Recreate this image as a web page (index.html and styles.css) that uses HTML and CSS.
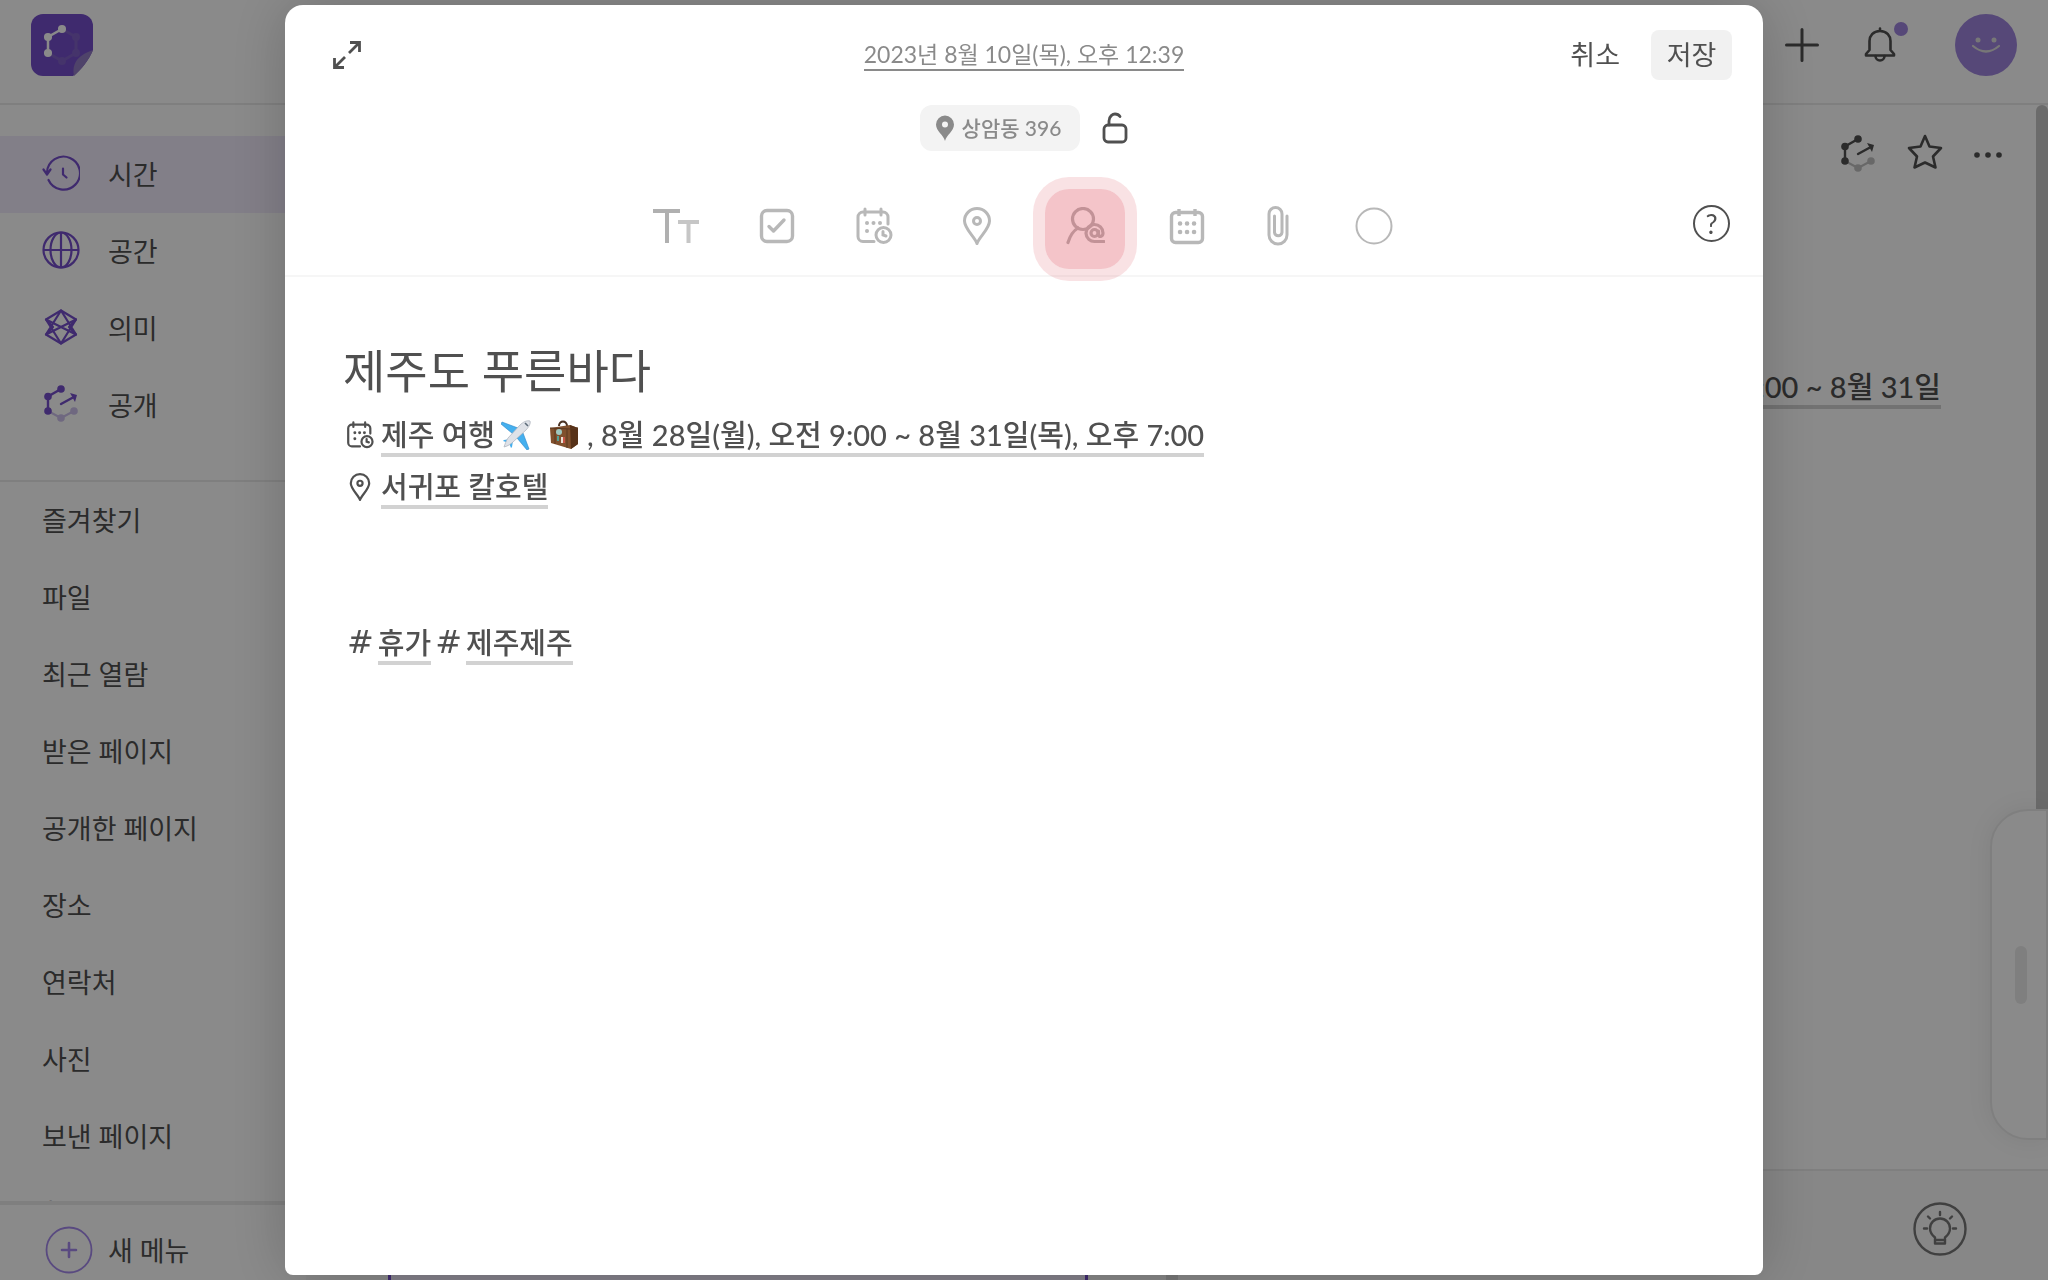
FILE: index.html
```
<!DOCTYPE html>
<html lang="ko">
<head>
    <meta charset="UTF-8">
    <meta name="viewport" content="width=device-width, initial-scale=1.0">
    <title>제주도 푸른바다</title>
    <link rel="stylesheet" href="styles.css">
</head>
<body>
    <!-- shared icons -->
    <svg class="sprite" aria-hidden="true">
        <symbol id="icon-share" viewBox="0 0 36 40">
            <g opacity="0.35">
                <path d="M5 27L18 34L31 27" fill="none" stroke="currentColor" stroke-width="2"/>
                <circle cx="18" cy="34" r="3.8" fill="currentColor"/>
                <circle cx="31" cy="27" r="3.8" fill="currentColor"/>
            </g>
            <path d="M18 5L5 12.500V27M18 20L29 14" fill="none" stroke="currentColor" stroke-width="2.400" stroke-linecap="round"/>
            <path d="M27 9L34 11L32 18Z" fill="currentColor"/>
            <circle cx="18" cy="5" r="3.800" fill="currentColor"/>
            <circle cx="5" cy="12.500" r="3.800" fill="currentColor"/>
            <circle cx="5" cy="27" r="3.800" fill="currentColor"/>
        </symbol>
        <symbol id="icon-schedule" viewBox="0 0 38 38">
            <g fill="none" stroke="currentColor" stroke-width="3" stroke-linecap="round">
                <path d="M19 34.500H8a5 5 0 0 1-5-5V10a5 5 0 0 1 5-5h20a5 5 0 0 1 5 5v7"/>
                <path d="M10 2v6M26 2v6"/>
                <circle cx="28.500" cy="28" r="7.500"/>
                <path d="M28 24.500v3.500l3 1"/>
            </g>
            <g fill="currentColor">
                <circle cx="12" cy="16" r="2"/><circle cx="18.500" cy="16" r="2"/><circle cx="25" cy="16" r="2"/><circle cx="12" cy="24" r="2"/>
            </g>
        </symbol>
        <symbol id="icon-pin" viewBox="0 0 38 38">
            <path d="M19 36.500C17 30 6.500 22 6.500 14a12.500 12.500 0 0 1 25 0C31.500 22 21 30 19 36.500Z" fill="none" stroke="currentColor" stroke-width="3" stroke-linejoin="round"/>
            <circle cx="19" cy="14" r="3.500" fill="none" stroke="currentColor" stroke-width="3"/>
        </symbol>
    </svg>

    <div class="app">
        <header class="topbar">
            <a class="logo" href="#" aria-label="홈">
                <svg width="62" height="62" viewBox="0 0 62 62">
                    <path d="M12 0H50a12 12 0 0 1 12 12V36C58 46 50 56 42 62H12A12 12 0 0 1 0 50V12A12 12 0 0 1 12 0Z" fill="#754ecb"/>
                    <path d="M62 36C58 46 50 56 43 62C41 52 44 42 62 36Z" fill="#937cc4"/>
                    <g stroke="#8060c6" fill="#8060c6" stroke-width="3">
                        <path d="M31 15L45 23V39L31 47L17 39" fill="none"/>
                        <circle cx="45" cy="23" r="2.500"/><circle cx="45" cy="39" r="2.500"/><circle cx="31" cy="47" r="2.500"/>
                    </g>
                    <g stroke="#fff" fill="#fff" stroke-width="2.500">
                        <path d="M31 15L17 23V39" fill="none"/>
                        <circle cx="31" cy="15" r="2.800"/><circle cx="17" cy="23" r="2.800"/><circle cx="17" cy="39" r="2.800"/>
                    </g>
                </svg>
            </a>
            <div class="topbar-actions">
                <button class="icon-btn" aria-label="새로 만들기">
                    <svg width="36" height="36" viewBox="0 0 36 36"><path d="M2.500 18H33.500M18 2.500V33.500" stroke="currentColor" stroke-width="3" stroke-linecap="round"/></svg>
                </button>
                <button class="icon-btn bell" aria-label="알림">
                    <svg width="36" height="36" viewBox="0 0 36 36" fill="none" stroke="currentColor" stroke-width="2.600" stroke-linecap="round" stroke-linejoin="round">
                        <path d="M18 1.500V4M18 4C11 4 7.500 9 7.500 14V23L4 27V28.500H32V27L28.500 23V14C28.500 9 25 4 18 4Z"/>
                        <path d="M13.500 29a4.500 4.500 0 0 0 9 0"/>
                    </svg>
                    <span class="bell-dot"></span>
                </button>
                <button class="avatar" aria-label="프로필">
                    <svg width="62" height="62" viewBox="0 0 62 62">
                        <circle cx="23" cy="26" r="2.500" fill="#ddd"/><circle cx="39" cy="26" r="2.500" fill="#ddd"/>
                        <path d="M18 32Q31 43 44 32" fill="none" stroke="#ddd" stroke-width="2.200" stroke-linecap="round"/>
                    </svg>
                </button>
            </div>
        </header>

        <div class="layout">
            <aside class="sidebar">
                <nav class="views">
                    <a class="view active" href="#">
                        <svg width="38" height="38" viewBox="0 0 38 38" fill="none" stroke="currentColor" stroke-width="2.200" stroke-linecap="round" stroke-linejoin="round">
                            <path d="M5 18.500A16.500 16.500 0 1 1 6.500 26M1.500 15.500L5 20.500L8.500 15.500M21 14.500V20.500L24.500 23.500"/>
                        </svg>
                        시간
                    </a>
                    <a class="view" href="#">
                        <svg width="38" height="38" viewBox="0 0 38 38" fill="none" stroke="currentColor" stroke-width="2.200">
                            <circle cx="19" cy="19" r="17.500"/><ellipse cx="19" cy="19" rx="10.500" ry="17.500"/><path d="M19 1.500V36.500M1.500 19H36.500"/>
                        </svg>
                        공간
                    </a>
                    <a class="view" href="#">
                        <svg width="38" height="38" viewBox="0 0 38 38" fill="none" stroke="currentColor" stroke-width="2.200" stroke-linejoin="round">
                            <path d="M19 2.500L34 11.500L27 19L34 26.500L19 35.500L4 26.500L11 19L4 11.500Z"/>
                            <path d="M19 2.500L4 26.500L34 11.500L19 35.500L4 11.500L34 26.500Z"/>
                        </svg>
                        의미
                    </a>
                    <a class="view" href="#">
                        <svg width="38" height="40"><use href="#icon-share"/></svg>
                        공개
                    </a>
                </nav>
                <nav class="menu">
                    <a href="#">즐겨찾기</a>
                    <a href="#">파일</a>
                    <a href="#">최근 열람</a>
                    <a href="#">받은 페이지</a>
                    <a href="#">공개한 페이지</a>
                    <a href="#">장소</a>
                    <a href="#">연락처</a>
                    <a href="#">사진</a>
                    <a href="#">보낸 페이지</a>
                    <a href="#">할 일</a>
                </nav>
                <button class="new-menu">
                    <svg width="48" height="48" viewBox="0 0 48 48" fill="none" stroke="#a589ed" stroke-linecap="round">
                        <circle cx="24" cy="24" r="22.500" stroke-width="1.800"/><path d="M17 24H31M24 17V31" stroke-width="2.600"/>
                    </svg>
                    새 메뉴
                </button>
            </aside>

            <main class="page">
                <div class="page-actions">
                    <button class="icon-btn" aria-label="공개"><svg width="36" height="40"><use href="#icon-share"/></svg></button>
                    <button class="icon-btn" aria-label="즐겨찾기">
                        <svg width="36" height="40" viewBox="0 0 36 40" fill="none" stroke="currentColor" stroke-width="2.600" stroke-linejoin="round"><path d="M18 2L22.500 12.500L34 14L26 22.500L28.500 33.500L18 28.500L7.500 33.500L10 22.500L2 14L13.500 12.500Z"/></svg>
                    </button>
                    <button class="icon-btn" aria-label="더보기">
                        <svg width="28" height="28" viewBox="0 0 28 28" fill="currentColor"><circle cx="3" cy="15" r="2.800"/><circle cx="14" cy="15" r="2.800"/><circle cx="25" cy="15" r="2.800"/></svg>
                    </button>
                </div>
                <div class="page-body"><a class="link" href="#">9:00 ~ 8월 31일</a></div>
                <footer class="page-footer">
                    <button class="tip" aria-label="도움말">
                        <svg width="54" height="54" viewBox="0 0 54 54" fill="none" stroke="currentColor" stroke-width="2.400" stroke-linecap="round" stroke-linejoin="round">
                            <circle cx="27" cy="27" r="25.500"/>
                            <path d="M22 38V35.500C19 33 17 30 17 26.500A10 10 0 0 1 37 26.500C37 30 35 33 32 35.500V38ZM22 38V41.500H32V38"/>
                            <path d="M27 10V13M15 14.500L17 16.500M39 14.500L37 16.500M11 26.500H14M40 26.500H43"/>
                        </svg>
                    </button>
                    <div class="calendar-strip"><span class="day"></span><span class="mark"></span></div>
                </footer>
            </main>
        </div>
        <span class="scroll-thumb"></span>
        <div class="drawer"><span class="drawer-handle"></span></div>
    </div>

    <div class="overlay">
        <section class="modal" role="dialog" aria-label="페이지 편집">
            <header class="modal-header">
                <div class="title-row">
                    <button class="icon-btn expand" aria-label="확대">
                        <svg width="32" height="32" viewBox="0 0 32 32" fill="none" stroke="currentColor" stroke-width="2.800"><path d="M18 14L28 4M19 3.500H28.500V13M14 18L4 28M3.500 19V28.500H13"/></svg>
                    </button>
                    <a class="date" href="#">2023년 8월 10일(목), 오후 12:39</a>
                    <div class="modal-actions">
                        <button class="cancel">취소</button>
                        <button class="save">저장</button>
                    </div>
                </div>
                <div class="meta-row">
                    <button class="place">
                        <svg width="20" height="26" viewBox="0 0 20 26"><path fill-rule="evenodd" d="M10 26C8.500 20 1 16 1 9.500a9 9 0 0 1 18 0C19 16 11.500 20 10 26ZM10 6.500a3 3 0 1 0 0 6a3 3 0 0 0 0-6Z" fill="currentColor"/></svg>
                        <span>상암동 396</span>
                    </button>
                    <button class="icon-btn" aria-label="잠금">
                        <svg width="26" height="32" viewBox="0 0 26 32" fill="none" stroke="currentColor" stroke-width="2.800" stroke-linecap="round"><rect x="2" y="13" width="22" height="17" rx="4"/><path d="M7 13V9C7 4 11 2 13 2C15 2 17 3 18 4.500"/></svg>
                    </button>
                </div>
                <div class="tool-row">
                    <div class="tools">
                        <button class="tool" aria-label="글자">
                            <svg width="46" height="36" viewBox="0 0 46 36" fill="none" stroke-width="4"><path d="M0 3H27M14 3V35" stroke="#b0b0b0"/><path d="M25 14H46M35.500 14V35" stroke="#c6c6c6"/></svg>
                        </button>
                        <button class="tool" aria-label="할 일">
                            <svg width="36" height="36" viewBox="0 0 36 36" fill="none" stroke="currentColor" stroke-width="3.400" stroke-linecap="round" stroke-linejoin="round"><rect x="2.500" y="2.500" width="31" height="31" rx="5.500"/><path d="M10 18.500L14.500 23L25 12"/></svg>
                        </button>
                        <button class="tool" aria-label="일정"><svg width="38" height="38"><use href="#icon-schedule"/></svg></button>
                        <button class="tool wide" aria-label="장소"><svg width="38" height="38"><use href="#icon-pin"/></svg></button>
                        <button class="tool wide person" aria-label="사람">
                            <svg width="40" height="38" viewBox="0 0 40 38" fill="none" stroke="currentColor" stroke-width="3.200" stroke-linecap="round">
                                <circle cx="18" cy="12" r="10.500"/><path d="M3 35.500C5 29 8 24 13 21M39 34.500H30A8.500 8.500 0 1 1 38 26C38 30 33.500 30.500 33.500 27.500V24"/><circle cx="29.500" cy="26" r="3.500"/>
                            </svg>
                        </button>
                        <button class="tool" aria-label="달력">
                            <svg width="36" height="38" viewBox="0 0 36 38" fill="none" stroke="currentColor" stroke-width="3.400"><rect x="2.500" y="5.500" width="31" height="30" rx="4"/><path d="M10 2V9M26 2V9"/><path d="M11 16.500H11.100M18 16.500H18.100M25 16.500H25.100M11 25H11.100M18 25H18.100M25 25H25.100" stroke-width="4.500" stroke-linecap="round"/></svg>
                        </button>
                        <button class="tool" aria-label="첨부">
                            <svg width="30" height="40" viewBox="0 0 30 40" fill="none" stroke="currentColor" stroke-width="3" stroke-linecap="round"><path d="M22 10V29A8.500 8.500 0 0 1 4 29V8A6.500 6.500 0 0 1 17 8V26.500A3.800 3.800 0 0 1 9.500 26.500V10"/></svg>
                        </button>
                        <button class="tool" aria-label="색상"><svg width="38" height="38" viewBox="0 0 38 38"><circle cx="19" cy="19" r="17.500" fill="none" stroke="currentColor" stroke-width="2"/></svg></button>
                    </div>
                    <button class="help" aria-label="도움말">?</button>
                </div>
            </header>
            <article class="editor">
                <h1>제주도 푸른바다</h1>
                <p>
                    <svg class="line-icon" width="28" height="28"><use href="#icon-schedule"/></svg>
                    <a class="link" href="#">제주 여행<svg class="emoji plane" width="30" height="30" viewBox="0 0 30 30">
                            <path d="M17 8L1 2L0 4L12 14ZM22 13L28 29L26 30L16 18Z" fill="#45b0ef" stroke="#2b86c8" stroke-width=".6"/>
                            <path d="M9 19L3 20L2 21L8 23L10 28L11 27L12 21Z" fill="#45b0ef"/>
                            <path d="M29 1C26 0 22 2 19 5L7 18C5 21 4 24 3 27C7 26 10 24 12 22L25 10C28 7 30 3 29 1Z" fill="#dfe2e8" stroke="#aab0ba" stroke-width=".7"/>
                            <path d="M24 3L27 6" stroke="#5b6a78" stroke-width="1.500"/>
                        </svg><svg class="emoji case" width="30" height="30" viewBox="0 0 30 30">
                            <path d="M10 6C10 0 18 0 18 6" fill="none" stroke="#4b3222" stroke-width="2"/>
                            <path d="M1 8L21 5L29 8V24L22 29L2 23Z" fill="#80502d"/>
                            <path d="M21 5L29 8V24L22 29Z" fill="#573218"/>
                            <path d="M1 8L21 9L29 8M6 8V24M18 9V28" fill="none" stroke="#5a3820" stroke-width="1"/>
                            <circle cx="10" cy="12" r="3" fill="#9fc8c0"/><path d="M8 16H10V21H8Z" fill="#54a095"/><path d="M12 17H14V23H12Z" fill="#eadfd4"/><path d="M14 17H16V23H14Z" fill="#c55345"/>
                        </svg>, 8월 28일(월), 오전 9:00 ~ 8월 31일(목), 오후 7:00</a>
                </p>
                <p>
                    <svg class="line-icon" width="28" height="28"><use href="#icon-pin"/></svg>
                    <a class="link" href="#">서귀포 칼호텔</a>
                </p>
                <p></p>
                <p></p>
                <p>
                    <span class="hash">#</span><a class="link" href="#">휴가</a>
                    <span class="hash">#</span><a class="link" href="#">제주제주</a>
                </p>
            </article>
        </section>
    </div>
</body>
</html>
```
FILE: styles.css
```
* {
    box-sizing: border-box;
}
body {
    margin: 0;
    font-family: Lato, "Noto Sans CJK KR", sans-serif;
    font-size: 27px;
    color: #505050;
    background: #fff;
}
a {
    color: inherit;
    text-decoration: none;
}
button {
    border: 0;
    padding: 0;
    background: none;
    font: inherit;
    color: inherit;
    cursor: pointer;
}
svg {
    display: block;
    flex-shrink: 0;
}
.sprite {
    position: absolute;
    width: 0;
    height: 0;
}
.icon-btn {
    display: flex;
    align-items: center;
    justify-content: center;
}

/* app behind the dialog */
.app {
    position: relative;
    display: flex;
    flex-direction: column;
    height: 100vh;
    overflow: hidden;
}
.topbar {
    display: flex;
    align-items: flex-start;
    justify-content: space-between;
    height: 105px;
    padding: 14px 31px;
    border-bottom: 2px solid #ebebeb;
}
.topbar-actions {
    display: flex;
    align-items: center;
    gap: 42px;
}
.bell {
    position: relative;
    margin-right: 15px;
}
.bell-dot {
    position: absolute;
    top: -5px;
    right: -10px;
    width: 14px;
    height: 14px;
    border-radius: 50%;
    background: #9f85de;
}
.avatar {
    border-radius: 50%;
    background: #9f85de;
}
.layout {
    display: flex;
    flex: 1;
    min-height: 0;
}
.sidebar {
    display: flex;
    flex-direction: column;
    width: 306px;
}
.views {
    padding: 31px 0 36px;
    border-bottom: 2px solid #ebebeb;
}
.view {
    display: flex;
    align-items: center;
    gap: 28px;
    height: 77px;
    padding: 0 0 3px 42px;
}
.view svg {
    color: #754ecb;
}
.view.active {
    background: #f1ebfc;
}
.menu {
    flex: 1;
    min-height: 0;
    overflow: hidden;
}
.menu a {
    display: block;
    height: 77px;
    padding-left: 42px;
    line-height: 77px;
}
.new-menu {
    display: flex;
    align-items: center;
    gap: 15px;
    height: 79px;
    padding: 14px 0 0 45px;
    border-top: 4px solid #ebebeb;
}
.page {
    display: flex;
    flex: 1;
    flex-direction: column;
}
.page-actions {
    display: flex;
    align-items: center;
    justify-content: flex-end;
    gap: 31px;
    height: 98px;
    padding-right: 46px;
}
.page-body {
    flex: 1;
    padding: 158px 107px 0 0;
    text-align: right;
}
.page-footer {
    display: flex;
    flex-direction: column;
    align-items: flex-end;
    justify-content: space-between;
    height: 111px;
    padding-top: 31px;
    border-top: 2px solid #ebebeb;
    background: #f9f9f9;
}
.tip {
    margin-right: 81px;
    color: #777;
}
.calendar-strip {
    display: flex;
    gap: 78px;
    align-self: stretch;
    height: 8px;
    padding-left: 82px;
}
.day {
    width: 700px;
    border: 3px solid #754ecb;
    border-width: 0 3px;
    background: #f1ebfc;
}
.mark {
    width: 12px;
    background: #ddd;
}
.scroll-thumb {
    position: absolute;
    top: 105px;
    right: 0;
    width: 12px;
    height: 720px;
    border-radius: 6px 6px 0 0;
    background: #c6c6c6;
}
.drawer {
    position: absolute;
    right: 0;
    bottom: 140px;
    display: flex;
    align-items: center;
    width: 58px;
    height: 331px;
    padding-left: 23px;
    border: 2px solid #ebebeb;
    border-radius: 38px 0 0 38px;
    background: #fff;
    box-shadow: 0 0 24px rgba(0, 0, 0, 0.08);
}
.drawer-handle {
    width: 12px;
    height: 58px;
    border-radius: 6px;
    background: #ebebeb;
}

/* dialog */
.overlay {
    position: fixed;
    inset: 0;
    display: flex;
    padding: 5px 285px;
    background: rgba(0, 0, 0, 0.46);
}
.modal {
    display: flex;
    flex: 1;
    flex-direction: column;
    border-radius: 18px 18px 8px 8px;
    background: #fff;
    box-shadow: 0 0 60px rgba(0, 0, 0, 0.2);
}
.modal-header {
    padding-top: 25px;
    border-bottom: 2px solid #f6f6f6;
}
.title-row {
    display: grid;
    grid-template-columns: 1fr auto 1fr;
    align-items: center;
    height: 50px;
    padding: 0 31px;
}
.expand {
    justify-self: start;
    margin-left: 15px;
}
.date {
    border-bottom: 2px solid #8a8a8a;
    font-size: 23px;
    line-height: 30px;
    color: #8a8a8a;
}
.modal-actions {
    display: flex;
    align-items: center;
    justify-content: flex-end;
    gap: 31px;
}
.cancel,
.save {
    height: 50px;
    padding-bottom: 3px;
}
.save {
    width: 81px;
    border-radius: 8px;
    background: #f1f1f1;
}
.meta-row {
    display: flex;
    align-items: center;
    justify-content: center;
    gap: 22px;
    margin-top: 25px;
}
.place {
    display: flex;
    align-items: center;
    gap: 7px;
    height: 46px;
    padding: 0 19px 0 15px;
    border-radius: 12px;
    background: #f3f3f3;
    font-size: 21px;
    font-weight: 500;
    color: #8a8a8a;
}
.place span {
    padding-bottom: 3px;
}
.tool-row {
    position: relative;
    display: flex;
    align-items: center;
    justify-content: center;
    height: 98px;
    margin-top: 26px;
    padding-right: 2px;
}
.tools {
    display: flex;
    align-items: center;
    gap: 60px;
    color: #b8b8b8;
}
.tool {
    display: flex;
    justify-content: center;
}
.tool.wide {
    width: 48px;
}
.person {
    position: relative;
}
.person::after {
    content: "";
    position: absolute;
    top: -18px;
    left: -16px;
    width: 80px;
    height: 80px;
    border-radius: 24px;
    background: rgba(218, 60, 75, 0.3);
    box-shadow: 0 0 0 12px rgba(218, 60, 75, 0.15);
}
.help {
    position: absolute;
    top: 28px;
    right: 33px;
    width: 37px;
    height: 37px;
    border: 2px solid #505050;
    border-radius: 50%;
    line-height: 32px;
}
.editor {
    flex: 1;
    padding: 56px 58px;
}
.editor h1 {
    margin: 0;
    font-size: 46px;
    font-weight: 400;
    line-height: 76px;
}
.editor p {
    display: flex;
    align-items: flex-start;
    height: 52px;
    margin: 0;
}
.line-icon {
    margin: 12px 7px 0 3px;
}
.link {
    display: inline-block;
    height: 48px;
    border-bottom: 4px solid #d2d2d2;
    font-size: 29px;
    font-weight: 500;
    line-height: 52px;
}
.emoji {
    display: inline-block;
    vertical-align: -4px;
}
.plane {
    margin: 0 18px 0 6px;
}
.case {
    margin-right: 8px;
}
.hash {
    margin: 0 4px;
    font-family: "DejaVu Sans", sans-serif;
    font-size: 32px;
    font-weight: 400;
    line-height: 50px;
}
```
